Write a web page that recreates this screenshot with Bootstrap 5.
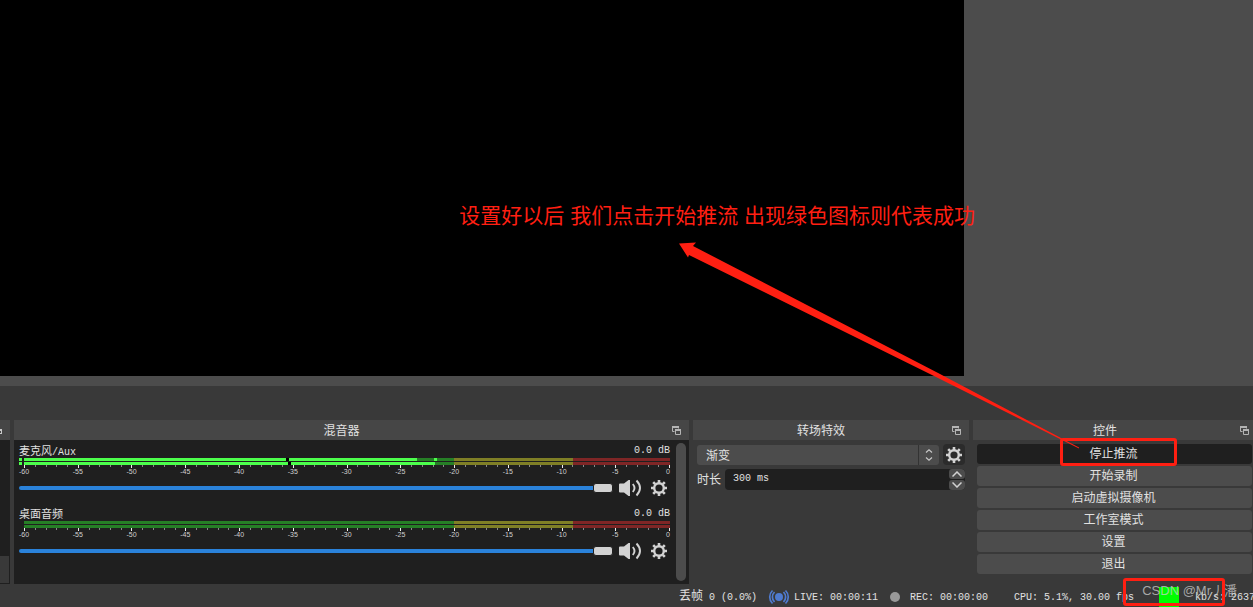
<!DOCTYPE html>
<html lang="zh-CN">
<head>
<meta charset="utf-8">
<meta name="viewport" content="width=device-width, initial-scale=1">
<title>OBS</title>
<link href="https://cdn.jsdelivr.net/npm/bootstrap@5.3.0/dist/css/bootstrap.min.css" rel="stylesheet">
<style>
  body { background: #393939; color: #e1e1e1; font: 12px/20px "Liberation Sans", "Noto Sans CJK SC", sans-serif; }
  .mono { font-family: "Liberation Mono", "Noto Sans CJK SC", monospace; font-size: 10px; white-space: pre; }
  .preview { background: #4c4c4c; padding: 0 289px 10px 0; }
  .canvas { background: #000; }
  .toolbar-gap { height: 34px; }
  .docks { gap: 4px; height: 164px; }
  .dock-title { background: #464646; height: 20px; padding-right: 8px; }
  .dock-title h2 { font-size: 12px; line-height: 22px; margin: 0; padding-right: 3px; font-weight: 400; }
  .float-btn { width: 9px; height: 20px; padding: 0; border: 0; background: none; display: flex; align-items: center; }
  .dock-scene { width: 10px; }
  .dock-trans { width: 276px; }
  .dock-ctrl { width: 280px; }
  .dark { background: #1f1f1f; }
  .scene-foot { height: 27px; margin: 0 1px 1px 0; background: #393939; }

  .mixer-body { padding: 0 3px 0 5px; }
  .channel { height: 63px; }
  .channel-name { font-size: 11px; line-height: 22px; height: 18px; }
  .meter { padding-left: 5px; height: 21px; }
  .meter-bar { height: 3px; margin-bottom: 1px;
    background: linear-gradient(90deg, #267f26 66.6%, #7f7f26 66.6% 85%, #7f2626 85%); }
  .lit { height: 3px; background: #4cff4c; }
  .lit::before { content: ""; position: absolute; left: -5px; width: 3px; height: 3px; background: #4cff4c; }
  .peak { top: 0; width: 3px; height: 3px; }
  .tick { top: 7px; width: 1px; height: 2px; background: #8a8a8a; }
  .tick.major { height: 3px; background: #f0f0f0; }
  .tick-label { top: 10px; width: 20px; margin-left: -10px; text-align: center; font-size: 7px; line-height: 8px; color: #d0d0d0; }
  .tick-label.last { width: auto; margin: 0; right: 0; }
  .volume { -webkit-appearance: none; appearance: none; height: 10px; background: none; margin: 0; min-width: 0; }
  .volume::-webkit-slider-runnable-track { height: 4px; border-radius: 2px; background: #2a82da; }
  .volume::-webkit-slider-thumb { -webkit-appearance: none; width: 20px; height: 10px; margin-top: -3px; border: 1px solid #1f1f1f; border-radius: 3px; background: #d2d2d2; }
  .icon-btn { border: 0; padding: 0; background: none; color: #d2d2d2; display: flex; }
  .vol-btn { margin-left: 5px; }
  .cog-btn { margin: 0 3px 0 9px; }
  .scroller { width: 10px; margin: 3px 0 3px 6px; border-radius: 5px; background: #4c4c4c; }

  .trans-body { padding: 4px 4px 0; }
  .combo { height: 20px; border: 0; border-radius: 3px; background: #4c4c4c; color: #e1e1e1; font-size: 12px; line-height: 20px; padding: 1px 9px 0; -webkit-appearance: none; appearance: none; }
  .combo-arrows { right: 0; top: 0; width: 21px; height: 20px; border-left: 1px solid #333; pointer-events: none; }
  .gear-btn { width: 22px; height: 21px; border-radius: 4px; background: #2b2b2b; align-items: center; justify-content: center; }
  .spin { height: 21px; border-radius: 4px; background: #1f1f1f; overflow: hidden; }
  .spin input { border: 0; background: none; color: #e1e1e1; padding: 0 0 2px 8px; min-width: 0; }
  .spin-btn { width: 16px; height: 10px; border: 0; padding: 0; border-radius: 3px; background: #4c4c4c; color: #d2d2d2; display: flex; align-items: center; justify-content: center; }

  .ctrl-body { padding: 4px 1px 0 4px; gap: 2px; }
  .ctrl-btn { height: 20px; border: 0; border-radius: 3px; padding: 1px 2px 0 0; background: #4c4c4c; color: #e1e1e1; font-size: 12px; line-height: 19px; }
  .ctrl-btn.on { background: #1f1f1f; }

  .status { height: 23px; line-height: 27px; }
  .status .cjk { font-size: 12px; }
  .live { margin: 4px 1px 0 8px; }
  .dot { width: 10px; height: 10px; border-radius: 50%; background: #999; margin: 3px 10px 0 12px; }
  .rec { margin-right: 26px; }
  .health { width: 20px; height: 20px; margin: 3px 16px 0 25px; background: #0f0; }
  .rate { width: 58px; }

  .note { right: 278px; bottom: 376px; font-size: 21px; line-height: 30px; color: #ff1f12; white-space: nowrap; }
  .marks { right: 0; bottom: 0; pointer-events: none; }
  .watermark { right: 16px; bottom: 6px; font-size: 13px; line-height: 20px; color: rgba(205,205,205,.75); white-space: nowrap; }
</style>
</head>
<body>
<div class="position-relative d-flex flex-column vh-100 overflow-hidden">
  <main class="preview flex-grow-1 d-flex"><div class="canvas flex-grow-1"></div></main>
  <div class="toolbar-gap flex-shrink-0"></div>

  <div class="docks d-flex flex-shrink-0">
    <section class="dock-scene dark d-flex flex-column flex-shrink-0">
      <div class="dock-title d-flex"><svg width="2" height="20" viewBox="0 0 2 20"><path d="M0 9h2v5H0v-1h1v-2H0z" fill="#c8c8c8"/></svg></div>
      <div class="scene-foot mt-auto"></div>
    </section>

    <section class="flex-grow-1 d-flex flex-column">
      <div class="dock-title d-flex">
        <h2 class="flex-grow-1 text-center">混音器</h2>
        <button class="float-btn" aria-label="浮动"><svg width="9" height="9" viewBox="0 0 9 9"><use href="#i-float"/></svg></button>
      </div>
      <div class="mixer-body dark flex-grow-1 d-flex">
        <div class="flex-grow-1">
          <div class="channel">
            <div class="channel-name d-flex justify-content-between"><span>麦克风<span class="mono">/Aux</span></span><span class="mono">0.0 dB</span></div>
            <div class="meter"><div class="position-relative scale">
              <div class="meter-bar position-relative"><div class="lit" style="width:60.8%"></div><i class="peak position-absolute bg-black" style="left:40.6%"></i><i class="peak position-absolute" style="left:63.5%;background:#4cff4c"></i></div>
              <div class="meter-bar position-relative"><div class="lit" style="width:63.6%"></div><i class="peak position-absolute bg-black" style="left:40.9%"></i></div>
            </div></div>
            <div class="d-flex align-items-center">
              <input class="volume flex-grow-1" type="range" value="100" aria-label="麦克风/Aux 音量">
              <button class="icon-btn vol-btn" aria-label="静音"><svg width="24" height="18" viewBox="0 0 24 18"><use href="#i-vol"/></svg></button>
              <button class="icon-btn cog-btn" aria-label="设置"><svg width="16" height="16" viewBox="0 0 16 16"><use href="#i-gear"/></svg></button>
            </div>
          </div>
          <div class="channel">
            <div class="channel-name d-flex justify-content-between"><span>桌面音频</span><span class="mono">0.0 dB</span></div>
            <div class="meter"><div class="position-relative scale">
              <div class="meter-bar"></div>
              <div class="meter-bar"></div>
            </div></div>
            <div class="d-flex align-items-center">
              <input class="volume flex-grow-1" type="range" value="100" aria-label="桌面音频 音量">
              <button class="icon-btn vol-btn" aria-label="静音"><svg width="24" height="18" viewBox="0 0 24 18"><use href="#i-vol"/></svg></button>
              <button class="icon-btn cog-btn" aria-label="设置"><svg width="16" height="16" viewBox="0 0 16 16"><use href="#i-gear"/></svg></button>
            </div>
          </div>
        </div>
        <div class="scroller"></div>
      </div>
    </section>

    <section class="dock-trans flex-shrink-0">
      <div class="dock-title d-flex">
        <h2 class="flex-grow-1 text-center">转场特效</h2>
        <button class="float-btn" aria-label="浮动"><svg width="9" height="9" viewBox="0 0 9 9"><use href="#i-float"/></svg></button>
      </div>
      <div class="trans-body">
        <div class="d-flex align-items-center gap-1">
          <div class="position-relative flex-grow-1">
            <select class="combo w-100 d-block" aria-label="转场特效"><option>渐变</option></select>
            <span class="combo-arrows position-absolute d-flex align-items-center justify-content-center"><svg width="8" height="12" viewBox="0 0 8 12" fill="none" stroke="#c8c8c8" stroke-width="1.200"><path d="M1 3.500 4 .8l3 2.700M1 8.500l3 2.700 3-2.700"/></svg></span>
          </div>
          <button class="icon-btn gear-btn" aria-label="转场设置"><svg width="16" height="16" viewBox="0 0 16 16"><use href="#i-gear"/></svg></button>
        </div>
        <div class="d-flex align-items-center gap-1 pt-1">
          <label for="dur">时长</label>
          <div class="spin flex-grow-1 d-flex">
            <input id="dur" class="mono flex-grow-1" type="text" value="300 ms">
            <div class="d-flex flex-column justify-content-between">
              <button class="spin-btn" aria-label="增加"><svg width="10" height="6" viewBox="0 0 10 6" fill="none" stroke="currentColor" stroke-width="1.500"><path d="M.5 5.500 5 1l4.500 4.500"/></svg></button>
              <button class="spin-btn" aria-label="减少"><svg width="10" height="6" viewBox="0 0 10 6" fill="none" stroke="currentColor" stroke-width="1.500"><path d="M.5.5 5 5 9.500.5"/></svg></button>
            </div>
          </div>
        </div>
      </div>
    </section>

    <section class="dock-ctrl flex-shrink-0">
      <div class="dock-title d-flex pe-1">
        <h2 class="flex-grow-1 text-center">控件</h2>
        <button class="float-btn" aria-label="浮动"><svg width="9" height="9" viewBox="0 0 9 9"><use href="#i-float"/></svg></button>
      </div>
      <div class="ctrl-body d-flex flex-column">
        <button class="ctrl-btn on">停止推流</button>
        <button class="ctrl-btn">开始录制</button>
        <button class="ctrl-btn">启动虚拟摄像机</button>
        <button class="ctrl-btn">工作室模式</button>
        <button class="ctrl-btn">设置</button>
        <button class="ctrl-btn">退出</button>
      </div>
    </section>
  </div>

  <footer class="status mono d-flex justify-content-end flex-shrink-0">
    <span><span class="cjk">丢帧</span> 0 (0.0%)</span>
    <svg class="live" width="28" height="18" viewBox="0 0 28 18" fill="none" stroke="#4f7bd0" stroke-width="1.700"><circle cx="14" cy="9" r="4" fill="#4f7bd0" stroke="none"/><path d="M9.500 4a7 7 0 0 0 0 10M18.500 4a7 7 0 0 1 0 10M7.500 2.500a9 9 0 0 0 0 13M20.500 2.500a9 9 0 0 1 0 13"/></svg>
    <span>LIVE: 00:00:11</span>
    <span class="dot align-self-center"></span>
    <span class="rec">REC: 00:00:00</span>
    <span>CPU: 5.1%, 30.00 fps</span>
    <span class="health"></span>
    <span class="rate overflow-hidden">kb/s: 2637</span>
  </footer>

  <div class="note position-absolute">设置好以后 我们点击开始推流 出现绿色图标则代表成功</div>
  <div class="watermark position-absolute">CSDN @Mr丿潘</div>
  <svg class="marks position-absolute" width="593" height="377" viewBox="660 230 593 377">
    <path d="M679 243.500 696 242.500 693 246 940 374 1079 447.500 1079 448.500 938 378 689 255 688 257.500z" fill="#ff1f12"/>
    <rect x="1061.500" y="439.500" width="114" height="25" rx="1.500" fill="none" stroke="#ff1f12" stroke-width="3"/>
    <rect x="1124.500" y="579.500" width="99" height="25" rx="1.500" fill="none" stroke="#ff1f12" stroke-width="3"/>
  </svg>
</div>

<svg width="0" height="0" class="position-absolute">
  <defs>
    <g id="i-float"><path fill="none" stroke="#b4b4b4" d="M2.500 5.500h-2v-5h6v2"/><path fill="#b4b4b4" d="M0 0h7v2H0zM3 3h6v2H3z"/><path fill="none" stroke="#b4b4b4" d="M3.500 3.500h5v5h-5z"/></g>
    <g id="i-gear" fill="none" stroke="currentColor"><circle cx="8" cy="8" r="4.800" stroke-width="2.400"/><path stroke-width="2.600" d="M8 0v3M8 13v3M0 8h3M13 8h3M2.200 2.200l2 2M11.800 11.800l2 2M13.800 2.200l-2 2M4.200 11.800l-2 2"/></g>
    <g id="i-vol"><path fill="currentColor" d="M1 5.500q0-1 1-1h4L10.500 1H12v16h-1.500L6 13.500H2q-1 0-1-1z"/><path fill="none" stroke="currentColor" stroke-width="1.900" d="M14.800 5q3.400 4 0 8M18.500 1.500q7 7.500 0 15"/></g>
  </defs>
</svg>
<script>
  // dB scale: one tick per dB, a label every five
  document.querySelectorAll('.scale').forEach(function (scale) {
    for (var db = -60; db <= 0; db++) {
      var part = (db + 60) / 60;
      var x = 'calc(' + part * 100 + '% - ' + part + 'px)';
      var tick = document.createElement('i');
      tick.className = 'tick position-absolute' + (db % 5 ? '' : ' major');
      tick.style.left = x;
      scale.appendChild(tick);
      if (db % 5) continue;
      var label = document.createElement('span');
      label.className = 'tick-label position-absolute' + (db ? '' : ' last');
      if (db) label.style.left = x;
      label.textContent = db;
      scale.appendChild(label);
    }
  });
</script>
<script src="https://cdn.jsdelivr.net/npm/bootstrap@5.3.0/dist/js/bootstrap.bundle.min.js"></script>
</body>
</html>
